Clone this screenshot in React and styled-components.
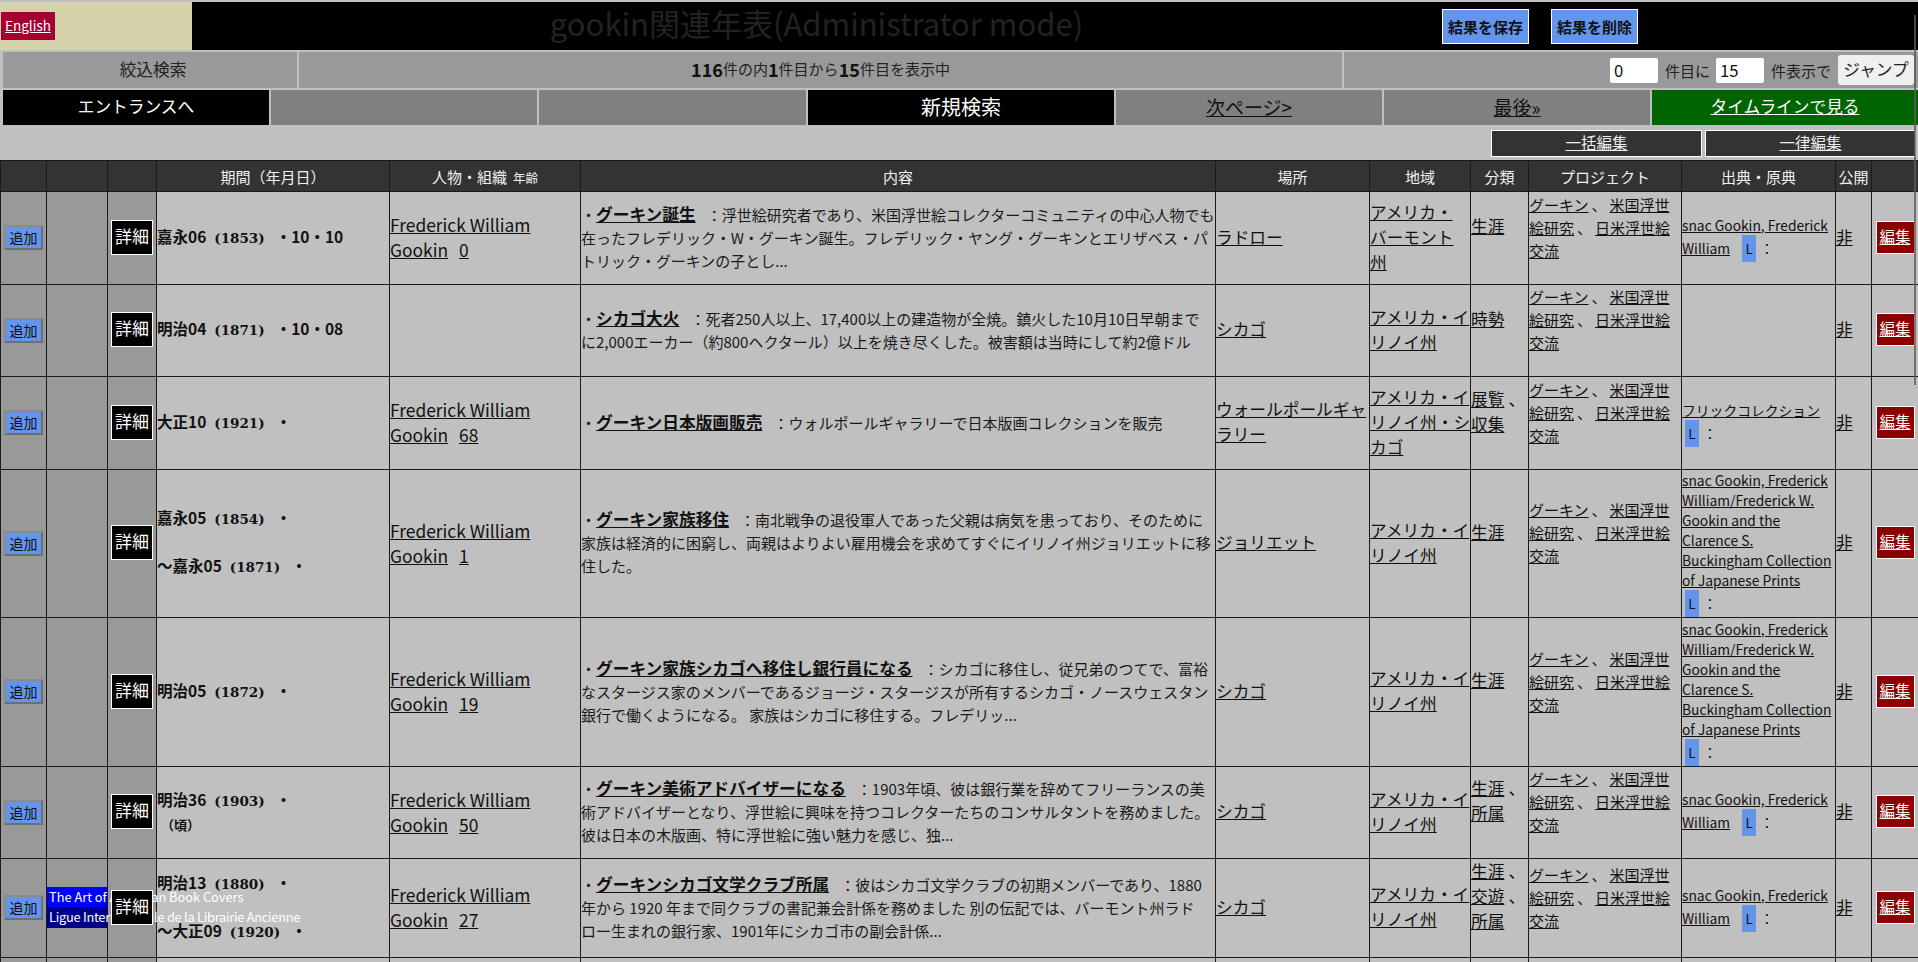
import React from "react";
import styled, { createGlobalStyle } from "styled-components";

const FONT = `"Noto Sans CJK JP", "Noto Sans", sans-serif`;

const Global = createGlobalStyle`
  html, body { margin: 0; padding: 0; height: 100%; overflow: hidden; background: #c0c0c0; }
  body { font-family: ${FONT}; color: #111; }
  a { color: inherit; }
`;

const Page = styled.div`
  width: 1918px;
  padding-top: 2px;
`;

const ScrollThumb = styled.div`
  position: fixed;
  top: 15px;
  right: 2px;
  width: 2px;
  height: 370px;
  background: rgba(90, 90, 90, 0.8);
  z-index: 5;
`;

const TopBar = styled.header`
  display: flex;
  height: 48px;
  background: #000;
`;

const LangPanel = styled.div`
  width: 192px;
  background: #d6d2ac;
  display: flex;
  align-items: center;
  padding-left: 1px;
  box-sizing: border-box;
`;

const LangLink = styled.a`
  width: 54px;
  height: 28px;
  background: #a50034;
  color: #fff;
  font-size: 13.5px;
  line-height: 26px;
  text-align: center;
`;

const Title = styled.h1`
  flex: 1;
  margin: 0;
  text-align: center;
  font-size: 31px;
  font-weight: 400;
  line-height: 41px;
  color: #222;
`;

const SaveGroup = styled.div`
  width: 477px;
  display: flex;
  align-items: center;
  gap: 22px;
  padding-left: 1px;
  box-sizing: border-box;
`;

const SaveButton = styled.button`
  width: 87px;
  height: 35px;
  padding: 0;
  border: 1px solid #fff;
  background: #6495ed;
  color: #111;
  font: 700 15px ${FONT};
`;

const SearchRow = styled.div`
  display: grid;
  grid-template-columns: 294px 1043px 1fr;
  gap: 2px;
  margin-top: 2px;
  padding-left: 3px;
  height: 33px;
`;

const SearchCell = styled.div`
  background: #999;
  display: flex;
  align-items: center;
  justify-content: ${(p) => p.$align || "center"};
  box-sizing: border-box;
  padding: 0 0 3px ${(p) => p.$indent || "0"};
  font-size: ${(p) => p.$size || "15px"};
  color: #222;
  b { font-size: 18px; color: #111; }
`;

const JumpInput = styled.input`
  width: 48px;
  height: 25px;
  box-sizing: border-box;
  border: 0;
  border-radius: 2px;
  padding: 0 4px;
  margin: 3px 7px 0 0;
  background: #fff;
  font: 16.7px ${FONT};
  color: #111;
`;

const JumpLabel = styled.span`
  margin: 3px 6px 0 0;
`;

const JumpButton = styled.button`
  width: 76px;
  height: 30px;
  margin: 3px 4px 0 1px;
  padding: 0 0 2px;
  border: 0;
  border-radius: 3px;
  background: #efefef;
  color: #222;
  font: 16.7px ${FONT};
`;

const NavRow = styled.nav`
  display: grid;
  grid-template-columns: 266px 266px 267px 306px 266px 266px 266px;
  gap: 2px;
  margin-top: 5px;
  padding-left: 3px;
  height: 35px;
  width: 1915px;
  box-sizing: border-box;
`;

const NavCell = styled.a`
  display: flex;
  align-items: center;
  justify-content: center;
  padding-bottom: 3px;
  background: ${(p) => p.$bg || "#808080"};
  color: ${(p) => p.$fg || "#111"};
  font-size: ${(p) => p.$size || "16.7px"};
  text-decoration: ${(p) => (p.$plain ? "none" : "underline")};
`;

const BulkRow = styled.div`
  display: flex;
  justify-content: flex-end;
  gap: 3px;
  margin-top: 5px;
  padding-right: 2px;
  height: 27px;
`;

const BulkLink = styled.a`
  width: 211px;
  box-sizing: border-box;
  border: 1px solid #fff;
  background: #333;
  color: #eee;
  font-size: 15.5px;
  line-height: 22px;
  text-align: center;
`;

const Table = styled.table`
  width: 1918px;
  margin-top: 3px;
  table-layout: fixed;
  border-collapse: collapse;
`;

const Th = styled.th`
  height: 30px;
  padding: 0;
  background: #333;
  border: 1px solid #1a1a1a;
  color: #f2f2f2;
  font-size: 15px;
  font-weight: 400;
  small { font-size: 12.5px; margin-left: 6px; }
`;

const Td = styled.td`
  padding: 0 0 ${(p) => (p.$flush ? "0" : "2px")} 0;
  border: 1px solid #1a1a1a;
  background: ${(p) => (p.$side ? "#999" : "#c0c0c0")};
  text-align: ${(p) => (p.$center ? "center" : "left")};
  vertical-align: middle;
  white-space: nowrap;
`;

const AddButton = styled.button`
  width: 39px;
  height: 25px;
  padding: 0 0 2px;
  box-sizing: border-box;
  border: 2px solid;
  border-color: #8a8a8a #6e6e6e #6e6e6e #8a8a8a;
  background: #6495ed;
  color: #111;
  font: 14px ${FONT};
`;

const DetailLink = styled.a`
  display: inline-block;
  width: 42px;
  height: 35px;
  box-sizing: border-box;
  border: 1px solid #fff;
  background: #000;
  color: #fff;
  font-size: 17px;
  line-height: 30px;
  text-align: center;
  vertical-align: middle;
`;

const BookTag = styled.a`
  display: block;
  width: 61px;
  height: 20.5px;
  background: ${(p) => p.$bg};
  color: #fff;
  font-size: 12.8px;
  letter-spacing: ${(p) => p.$track || "0"};
  line-height: 20px;
  padding-left: 2px;
  box-sizing: border-box;
  white-space: nowrap;
`;

const DateLine = styled.div`
  font-size: 15.5px;
  font-weight: 700;
  line-height: 23px;
  margin-top: ${(p) => (p.$later ? "23px" : "0")};
`;

const Year = styled.span`
  font-family: "DejaVu Serif", serif;
  font-size: 13.5px;
  margin: 0 11px 0 8px;
`;

const DateNote = styled.div`
  font-size: 13px;
  font-weight: 700;
  line-height: 23px;
  padding-left: 4px;
`;

const LinkBlock = styled.div`
  font-size: ${(p) => p.$size || "16.7px"};
  line-height: ${(p) => p.$line || "25px"};
  padding-bottom: ${(p) => p.$trail || "0"};
  a { color: #111; }
`;

const Line = styled.div``;

const BadgeLine = styled.div`
  height: 27px;
  line-height: 27px;
`;

const Age = styled.a`
  margin-left: 11px;
`;

const Sep = styled.span`
  margin: 0 ${(p) => p.$gap || "3px"};
`;

const Body = styled.div`
  font-size: 15px;
  line-height: 23px;
  color: #1a1a1a;
`;

const Heading = styled.a`
  font-size: 16.7px;
  font-weight: 700;
  color: #111;
  margin: 0 11px 0 0;
`;

const Badge = styled.a`
  display: inline-block;
  width: 14px;
  height: 27px;
  margin: 0 4px 0 ${(p) => p.$offset || "3px"};
  background: #6495ed;
  color: #fff;
  font-size: 13.5px;
  line-height: 27px;
  text-align: center;
  text-decoration: none;
  vertical-align: top;
`;

const EditLink = styled.a`
  display: inline-block;
  width: 39px;
  height: 33px;
  box-sizing: border-box;
  border: 1px solid #fff;
  background: #8b0000;
  color: #fff;
  font-size: 15.5px;
  line-height: 28px;
  text-align: center;
  vertical-align: middle;
`;

const COLS = [46, 61, 49, 233, 191, 635, 154, 101, 58, 153, 154, 36, 47];
const HEADS = ["", "", "", "期間（年月日）", null, "内容", "場所", "地域", "分類", "プロジェクト", "出典・原典", "公開", ""];

const SNAC = ["snac Gookin, Frederick", "William"];
const LONG = [
  "snac Gookin, Frederick",
  "William/Frederick W.",
  "Gookin and the",
  "Clarence S.",
  "Buckingham Collection",
  "of Japanese Prints",
  "",
];

const ROWS = [
  {
    h: 93,
    dates: [["嘉永06", "(1853)", "・10・10"]],
    age: "0",
    title: "グーキン誕生",
    text: [
      "：浮世絵研究者であり、米国浮世絵コレクターコミュニティの中心人物でも",
      "在ったフレデリック・W・グーキン誕生。フレデリック・ヤング・グーキンとエリザベス・パ",
      "トリック・グーキンの子とし...",
    ],
    place: ["ラドロー"],
    area: ["アメリカ・", "バーモント", "州"],
    cat: [["生涯"]],
    src: SNAC,
  },
  {
    h: 92,
    dates: [["明治04", "(1871)", "・10・08"]],
    title: "シカゴ大火",
    text: [
      "：死者250人以上、17,400以上の建造物が全焼。鎮火した10月10日早朝まで",
      "に2,000エーカー（約800ヘクタール）以上を焼き尽くした。被害額は当時にして約2億ドル",
    ],
    place: ["シカゴ"],
    area: ["アメリカ・イ", "リノイ州"],
    cat: [["時勢"]],
    src: null,
  },
  {
    h: 93,
    dates: [["大正10", "(1921)", "・"]],
    age: "68",
    title: "グーキン日本版画販売",
    text: ["：ウォルポールギャラリーで日本版画コレクションを販売"],
    place: ["ウォールポールギャ", "ラリー"],
    area: ["アメリカ・イ", "リノイ州・シ", "カゴ"],
    cat: [["展覧", true], ["収集"]],
    src: ["フリックコレクション", ""],
  },
  {
    h: 148,
    dates: [["嘉永05", "(1854)", "・"], ["～嘉永05", "(1871)", "・"]],
    age: "1",
    title: "グーキン家族移住",
    text: [
      "：南北戦争の退役軍人であった父親は病気を患っており、そのために",
      "家族は経済的に困窮し、両親はよりよい雇用機会を求めてすぐにイリノイ州ジョリエットに移",
      "住した。",
    ],
    place: ["ジョリエット"],
    area: ["アメリカ・イ", "リノイ州"],
    cat: [["生涯"]],
    src: LONG,
  },
  {
    h: 149,
    dates: [["明治05", "(1872)", "・"]],
    age: "19",
    title: "グーキン家族シカゴへ移住し銀行員になる",
    text: [
      "：シカゴに移住し、従兄弟のつてで、富裕",
      "なスタージス家のメンバーであるジョージ・スタージスが所有するシカゴ・ノースウェスタン",
      "銀行で働くようになる。 家族はシカゴに移住する。フレデリッ...",
    ],
    place: ["シカゴ"],
    area: ["アメリカ・イ", "リノイ州"],
    cat: [["生涯"]],
    src: LONG,
  },
  {
    h: 92,
    dates: [["明治36", "(1903)", "・"]],
    note: "（頃）",
    age: "50",
    title: "グーキン美術アドバイザーになる",
    text: [
      "：1903年頃、彼は銀行業を辞めてフリーランスの美",
      "術アドバイザーとなり、浮世絵に興味を持つコレクターたちのコンサルタントを務めました。",
      "彼は日本の木版画、特に浮世絵に強い魅力を感じ、独...",
    ],
    place: ["シカゴ"],
    area: ["アメリカ・イ", "リノイ州"],
    cat: [["生涯", true], ["所属"]],
    src: SNAC,
  },
  {
    h: 99,
    dates: [["明治13", "(1880)", "・"], ["～大正09", "(1920)", "・"]],
    books: true,
    age: "27",
    title: "グーキンシカゴ文学クラブ所属",
    text: [
      "：彼はシカゴ文学クラブの初期メンバーであり、1880",
      "年から 1920 年まで同クラブの書記兼会計係を務めました 別の伝記では、バーモント州ラド",
      "ロー生まれの銀行家、1901年にシカゴ市の副会計係...",
    ],
    place: ["シカゴ"],
    area: ["アメリカ・イ", "リノイ州"],
    cat: [["生涯", true], ["交遊", true], ["所属"]],
    src: SNAC,
  },
];

const Links = ({ lines, ...rest }) => (
  <LinkBlock {...rest}>
    {lines.map((l, i) => (
      <Line key={i}>
        <a href="#">{l}</a>
      </Line>
    ))}
  </LinkBlock>
);

const Source = ({ lines }) => (
  <LinkBlock $size="13.8px" $line="20px">
    {lines.map((l, i) =>
      i === lines.length - 1 ? (
        <BadgeLine key={i}>
          {l && <a href="#">{l}</a>}
          <Badge href="#" $offset={l ? "12px" : "3px"}>L</Badge>：
        </BadgeLine>
      ) : (
        <Line key={i}>
          <a href="#">{l}</a>
        </Line>
      )
    )}
  </LinkBlock>
);

const Row = ({ r }) => (
  <tr style={{ height: r.h }}>
    <Td $side $center>
      <AddButton>追加</AddButton>
    </Td>
    <Td $side>
      {r.books && (
        <>
          <BookTag $bg="#0000ff">The Art of American Book Covers</BookTag>
          <BookTag $bg="#00008b" $track="-0.25px">Ligue Internationale de la Librairie Ancienne</BookTag>
        </>
      )}
    </Td>
    <Td $side $center>
      <DetailLink>詳細</DetailLink>
    </Td>
    <Td>
      {r.dates.map((d, i) => (
        <DateLine key={i} $later={i > 0}>
          {d[0]}
          <Year>{d[1]}</Year>
          {d[2]}
        </DateLine>
      ))}
      {r.note && <DateNote>{r.note}</DateNote>}
    </Td>
    <Td>
      {r.age && (
        <LinkBlock $size="17.4px">
          <Line>
            <a href="#">Frederick William</a>
          </Line>
          <Line>
            <a href="#">Gookin</a>
            <Age href="#">{r.age}</Age>
          </Line>
        </LinkBlock>
      )}
    </Td>
    <Td>
      <Body>
        {r.text.map((t, i) => (
          <Line key={i}>
            {i === 0 && (
              <>
                ・<Heading href="#">{r.title}</Heading>
              </>
            )}
            {t}
          </Line>
        ))}
      </Body>
    </Td>
    <Td>
      <Links lines={r.place} />
    </Td>
    <Td>
      <Links lines={r.area} />
    </Td>
    <Td $flush>
      <LinkBlock $trail="23px">
        {r.cat.map(([c, more], i) => (
          <Line key={i}>
            <a href="#">{c}</a>
            {more && <Sep $gap="4px">、</Sep>}
          </Line>
        ))}
      </LinkBlock>
    </Td>
    <Td $flush>
      <LinkBlock $size="15px" $line="23px" $trail="22px">
        <Line>
          <a href="#">グーキン</a>
          <Sep>、</Sep>
          <a href="#">米国浮世</a>
        </Line>
        <Line>
          <a href="#">絵研究</a>
          <Sep>、</Sep>
          <a href="#">日米浮世絵</a>
        </Line>
        <Line>
          <a href="#">交流</a>
        </Line>
      </LinkBlock>
    </Td>
    <Td $flush>{r.src && <Source lines={r.src} />}</Td>
    <Td>
      <LinkBlock>
        <a href="#">非</a>
      </LinkBlock>
    </Td>
    <Td $center>
      <EditLink href="#">編集</EditLink>
    </Td>
  </tr>
);

export default function App() {
  return (
    <Page>
      <Global />
      <ScrollThumb />
      <TopBar>
        <LangPanel>
          <LangLink href="#">English</LangLink>
        </LangPanel>
        <Title>gookin関連年表(Administrator mode)</Title>
        <SaveGroup>
          <SaveButton>結果を保存</SaveButton>
          <SaveButton>結果を削除</SaveButton>
        </SaveGroup>
      </TopBar>
      <SearchRow>
        <SearchCell $size="16.7px" $indent="6px">絞込検索</SearchCell>
        <SearchCell>
          <b>116</b>件の内<b>1</b>件目から<b>15</b>件目を表示中
        </SearchCell>
        <SearchCell $align="flex-end">
          <JumpInput defaultValue="0" />
          <JumpLabel>件目に</JumpLabel>
          <JumpInput defaultValue="15" />
          <JumpLabel>件表示で</JumpLabel>
          <JumpButton>ジャンプ</JumpButton>
        </SearchCell>
      </SearchRow>
      <NavRow>
        <NavCell $bg="#000" $fg="#fff" $plain>エントランスへ</NavCell>
        <NavCell />
        <NavCell />
        <NavCell $bg="#000" $fg="#fff" $size="20px" $plain>新規検索</NavCell>
        <NavCell href="#" $size="19px">次ページ&gt;</NavCell>
        <NavCell href="#" $size="19px">最後»</NavCell>
        <NavCell href="#" $bg="#006400" $fg="#fff">タイムラインで見る</NavCell>
      </NavRow>
      <BulkRow>
        <BulkLink href="#">一括編集</BulkLink>
        <BulkLink href="#">一律編集</BulkLink>
      </BulkRow>
      <Table>
        <colgroup>
          {COLS.map((w, i) => (
            <col key={i} style={{ width: w }} />
          ))}
        </colgroup>
        <thead>
          <tr>
            {HEADS.map((h, i) => (
              <Th key={i}>
                {h === null ? (
                  <>
                    人物・組織<small>年齢</small>
                  </>
                ) : (
                  h
                )}
              </Th>
            ))}
          </tr>
        </thead>
        <tbody>
          {ROWS.map((r, i) => (
            <Row key={i} r={r} />
          ))}
          <tr style={{ height: 92 }}>
            {COLS.map((_, i) => (
              <Td key={i} $side={i < 3} />
            ))}
          </tr>
        </tbody>
      </Table>
    </Page>
  );
}
